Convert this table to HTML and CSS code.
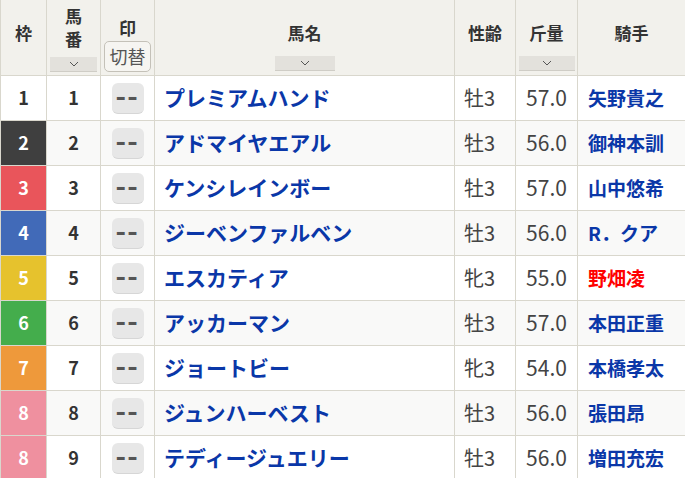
FILE: index.html
```html
<!DOCTYPE html>
<html lang="ja">
<head>
<meta charset="utf-8">
<title>出馬表</title>
<link rel="stylesheet" href="styles.css">
</head>
<body>
<div class="table">
  <div class="row head">
    <div class="hc h-waku"><span class="hl">枠</span></div>
    <div class="hc h-num"><span class="hl">馬<br>番</span><span class="sort wide"><svg width="10" height="6" viewBox="0 0 10 6"><path d="M1 1 L5 5 L9 1" fill="none" stroke="#555" stroke-width="1"/></svg></span></div>
    <div class="hc h-mark"><span class="hl">印</span><span class="switch">切替</span></div>
    <div class="hc h-name"><span class="hl">馬名</span><span class="sort narrow"><svg width="10" height="6" viewBox="0 0 10 6"><path d="M1 1 L5 5 L9 1" fill="none" stroke="#555" stroke-width="1"/></svg></span></div>
    <div class="hc h-sex"><span class="hl">性齢</span></div>
    <div class="hc h-wt"><span class="hl">斤量</span><span class="sort wide"><svg width="10" height="6" viewBox="0 0 10 6"><path d="M1 1 L5 5 L9 1" fill="none" stroke="#555" stroke-width="1"/></svg></span></div>
    <div class="hc h-jk"><span class="hl">騎手</span></div>
  </div>

  <div class="row">
    <div class="waku w1">1</div><div class="num">1</div><div class="mk"><span class="mbtn"><span class="dash">--</span></span></div>
    <div class="name">プレミアムハンド</div><div class="sex">牡3</div><div class="wt">57.0</div><div class="jk">矢野貴之</div>
  </div>
  <div class="row even">
    <div class="waku w2">2</div><div class="num">2</div><div class="mk"><span class="mbtn"><span class="dash">--</span></span></div>
    <div class="name">アドマイヤエアル</div><div class="sex">牡3</div><div class="wt">56.0</div><div class="jk">御神本訓</div>
  </div>
  <div class="row">
    <div class="waku w3">3</div><div class="num">3</div><div class="mk"><span class="mbtn"><span class="dash">--</span></span></div>
    <div class="name">ケンシレインボー</div><div class="sex">牡3</div><div class="wt">57.0</div><div class="jk">山中悠希</div>
  </div>
  <div class="row even">
    <div class="waku w4">4</div><div class="num">4</div><div class="mk"><span class="mbtn"><span class="dash">--</span></span></div>
    <div class="name">ジーベンファルベン</div><div class="sex">牡3</div><div class="wt">56.0</div><div class="jk">R．クア</div>
  </div>
  <div class="row">
    <div class="waku w5">5</div><div class="num">5</div><div class="mk"><span class="mbtn"><span class="dash">--</span></span></div>
    <div class="name">エスカティア</div><div class="sex">牝3</div><div class="wt">55.0</div><div class="jk red">野畑凌</div>
  </div>
  <div class="row even">
    <div class="waku w6">6</div><div class="num">6</div><div class="mk"><span class="mbtn"><span class="dash">--</span></span></div>
    <div class="name">アッカーマン</div><div class="sex">牡3</div><div class="wt">57.0</div><div class="jk">本田正重</div>
  </div>
  <div class="row">
    <div class="waku w7">7</div><div class="num">7</div><div class="mk"><span class="mbtn"><span class="dash">--</span></span></div>
    <div class="name">ジョートビー</div><div class="sex">牝3</div><div class="wt">54.0</div><div class="jk">本橋孝太</div>
  </div>
  <div class="row even">
    <div class="waku w8">8</div><div class="num">8</div><div class="mk"><span class="mbtn"><span class="dash">--</span></span></div>
    <div class="name">ジュンハーベスト</div><div class="sex">牡3</div><div class="wt">56.0</div><div class="jk">張田昂</div>
  </div>
  <div class="row">
    <div class="waku w8">8</div><div class="num">9</div><div class="mk"><span class="mbtn"><span class="dash">--</span></span></div>
    <div class="name">テディージュエリー</div><div class="sex">牡3</div><div class="wt">56.0</div><div class="jk">増田充宏</div>
  </div>
</div>
</body>
</html>
```

FILE: styles.css
```css
html, body {
  margin: 0;
  padding: 0;
  overflow: hidden;
  background: #ffffff;
}
body {
  font-family: "Noto Sans CJK JP", "Noto Sans", sans-serif;
  color: #333333;
}
.table {
  width: 684px;
  display: flex;
  flex-direction: column;
  gap: 1px;
  background: #d9d7cd;
  border-left: 1px solid #d9d7cd;
}
.row {
  display: grid;
  grid-template-columns: 45px 53px 53px 299px 60px 61px 1fr;
  gap: 1px;
  height: 44px;
}
.row > div {
  background: #ffffff;
  display: flex;
  align-items: center;
  box-sizing: border-box;
  padding-bottom: 2px;
}
.row > div.mk {
  padding-bottom: 0;
}
.row.even > div {
  background: #f9f9f8;
}
.row.head {
  height: 75px;
}
.row.head > .hc {
  background: #f2f1ec;
  flex-direction: column;
  align-items: center;
  justify-content: flex-start;
  font-weight: 700;
  font-size: 17px;
  color: #333;
  padding-bottom: 0;
}
.hl {
  display: block;
  line-height: 24px;
  text-align: center;
}
.row.head > .h-waku, .row.head > .h-sex, .row.head > .h-jk, .row.head > .h-name, .row.head > .h-wt { padding-top: 21px; }
.row.head > .h-num { padding-top: 4px; }
.h-num .hl { line-height: 23px; }
.row.head > .h-mark { padding-top: 16px; }
.sort {
  display: flex;
  align-items: center;
  justify-content: center;
  height: 14px;
  background: #e3e1dc;
  border-bottom: 1px solid #cfcdc6;
  margin-top: 11px;
}
.h-num .sort { margin-top: 7px; }
.sort.wide { align-self: stretch; margin-left: 3px; margin-right: 3px; }
.sort.narrow { width: 60px; }
.h-wt .sort { margin-left: 3px; margin-right: 2px; }
.switch {
  display: block;
  box-sizing: border-box;
  width: 47px;
  height: 31px;
  margin-top: 1px;
  border: 1px solid #c4c1b8;
  border-radius: 5px;
  background: #f6f5f1;
  font-weight: 400;
  font-size: 18px;
  line-height: 28px;
  text-align: center;
  color: #555;
}
.waku {
  justify-content: center;
  font-weight: 700;
  font-size: 18px;
  color: #ffffff;
}
.row > .waku.w1 { background: #ffffff; color: #333; }
.row > .waku.w2 { background: #3f3f3f; }
.row > .waku.w3 { background: #e9555b; }
.row > .waku.w4 { background: #416ab8; }
.row > .waku.w5 { background: #e6c22d; }
.row > .waku.w6 { background: #44ad4c; }
.row > .waku.w7 { background: #ee993b; }
.row > .waku.w8 { background: #ef909f; }
.num {
  justify-content: center;
  font-weight: 700;
  font-size: 18px;
  color: #333;
}
.mk {
  justify-content: center;
}
.mbtn {
  display: flex;
  align-items: center;
  justify-content: center;
  width: 32px;
  height: 31px;
  border-radius: 6px;
  background: #e7e7e7;
  border-bottom: 1px solid #d6d6d6;
  box-sizing: border-box;
  font-family: "DejaVu Sans", sans-serif;
  font-weight: 700;
  font-size: 22px;
  color: #555;
}
.dash {
  display: inline-block;
  letter-spacing: 1px;
  transform: scaleX(1.15);
  line-height: 1;
}
.name {
  padding-left: 9px;
  font-weight: 700;
  font-size: 21px;
  color: #0a37a8;
}
.sex {
  padding-left: 9px;
  font-size: 20px;
  color: #444;
}
.wt {
  justify-content: center;
  font-size: 21px;
  color: #444;
}
.jk {
  padding-left: 10px;
  font-weight: 700;
  font-size: 19px;
  color: #0a37a8;
}
.jk.red { color: #ff0000; }
```
